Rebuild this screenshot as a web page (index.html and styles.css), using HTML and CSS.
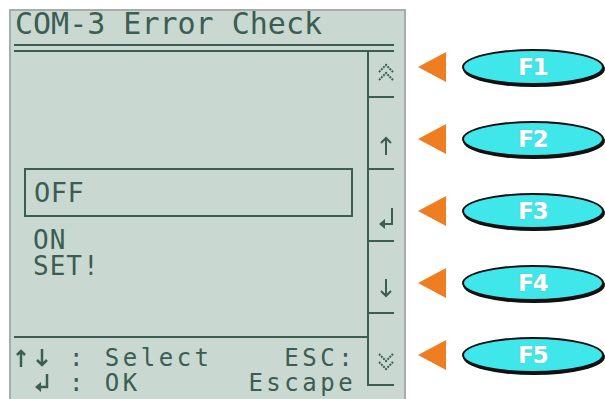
FILE: index.html
```html
<!DOCTYPE html>
<html lang="en">
<head>
  <meta charset="UTF-8">
  <title>COM-3 Error Check</title>
  <link rel="stylesheet" href="styles.css">
</head>
<body>

<div class="wrap">
  <div class="lcd">
    <div class="title">COM-3 Error Check</div>
    <div class="rule"></div>
    <div class="screen">
      <div class="main">
        <div class="list">
          <div class="option">OFF</div>
          <div class="options">
            <div>ON</div>
            <div>SET!</div>
          </div>
        </div>
        <div class="help">
          <div class="line"><svg class="arr" width="18" height="18" viewBox="0 0 18 18"><line x1="6" y1="2" x2="6" y2="18"/><polyline points="2,6 6,2 10,6"/></svg><svg class="arr" width="18" height="18" viewBox="0 0 18 18"><line x1="9" y1="0" x2="9" y2="16"/><polyline points="4,11 9,16 14,11"/></svg> : Select    ESC:</div>
          <div class="line"> <svg class="arr" width="18" height="18" viewBox="0 0 18 18"><polyline points="14,0 14,13 7,13"/><polygon class="fill" points="2,13 8,8 8,18"/></svg> : OK      Escape</div>
        </div>
      </div>
      <div class="side">
        <div class="cell first">
          <svg width="16" height="20" viewBox="0 0 16 20"><polyline class="dots" points="1,9 8,2 15,9"/><polyline class="dots" points="1,17 8,10 15,17"/></svg>
        </div>
        <div class="cell">
          <svg width="16" height="20" viewBox="0 0 16 20"><line x1="8" y1="3" x2="8" y2="20"/><polyline points="3,8 8,3 13,8"/></svg>
        </div>
        <div class="cell">
          <svg width="16" height="20" viewBox="0 0 16 20"><polyline points="14,1 14,17 6,17"/><polygon class="fill" points="1,17 7,12 7,22"/></svg>
        </div>
        <div class="cell">
          <svg width="16" height="20" viewBox="0 0 16 20"><line x1="8" y1="0" x2="8" y2="17"/><polyline points="3,12 8,17 13,12"/></svg>
        </div>
        <div class="cell">
          <svg width="16" height="20" viewBox="0 0 16 20"><polyline class="dots" points="1,3 8,10 15,3"/><polyline class="dots" points="1,11 8,18 15,11"/></svg>
        </div>
      </div>
    </div>
  </div>

  <div class="keys">
    <div class="key"><span class="pointer"></span><span class="fkey">F1</span></div>
    <div class="key"><span class="pointer"></span><span class="fkey">F2</span></div>
    <div class="key"><span class="pointer"></span><span class="fkey">F3</span></div>
    <div class="key"><span class="pointer"></span><span class="fkey">F4</span></div>
    <div class="key"><span class="pointer"></span><span class="fkey">F5</span></div>
  </div>
</div>

</body>
</html>
```

FILE: styles.css
```css
body {
  margin: 0;
  background: #fff;
}
.wrap {
  display: flex;
  padding: 9px 0 0 9px;
}
.lcd {
  width: 397px;
  height: 390px;
  box-sizing: border-box;
  border: 2px solid #a7adaa;
  border-bottom: none;
  background: #c9d9d1;
  color: #3d5c52;
  padding: 0 10px 0 3px;
  font-family: "DejaVu Sans Mono", "Liberation Mono", monospace;
}
.title {
  font-size: 30px;
  line-height: 24px;
  margin-top: 1px;
  padding-left: 1px;
  white-space: nowrap;
}
.rule {
  margin-top: 8px;
  height: 8px;
  box-sizing: border-box;
  border-top: 2px solid #3d5c52;
  border-bottom: 2px solid #3d5c52;
}
.screen {
  display: flex;
  align-items: flex-start;
}
.main {
  width: 353px;
}
.list {
  height: 286px;
  box-sizing: border-box;
  padding-top: 116px;
  border-bottom: 2px solid #3d5c52;
}
.option {
  margin-left: 10px;
  width: 329px;
  height: 49px;
  box-sizing: border-box;
  border: 2px solid #3d5c52;
  padding-left: 8px;
  font-size: 27px;
  line-height: 45px;
  letter-spacing: 0.5px;
}
.options {
  margin-top: 10px;
  padding-left: 19px;
  font-size: 26px;
  line-height: 26px;
  letter-spacing: 1px;
}
.help {
  padding: 8px 0 0 1px;
  font-size: 24px;
  line-height: 25px;
  letter-spacing: 3.5px;
}
.help .line {
  white-space: pre;
  height: 25px;
}
.help .arr {
  display: inline-block;
  vertical-align: -1px;
}
.help .arr line,
.help .arr polyline {
  fill: none;
  stroke: #3d5c52;
  stroke-width: 2.5;
}
.help .arr .fill {
  fill: #3d5c52;
}
.side {
  width: 25px;
  border-left: 2px solid #3d5c52;
}
.cell {
  height: 72px;
  box-sizing: border-box;
  border-bottom: 2px solid #3d5c52;
  display: flex;
  align-items: flex-end;
  justify-content: flex-end;
  padding-bottom: 13px;
}
.cell.first {
  height: 46px;
}
.cell svg {
  display: block;
  overflow: visible;
}
.cell svg line,
.cell svg polyline {
  fill: none;
  stroke: #3d5c52;
  stroke-width: 2;
}
.cell svg .dots {
  stroke-dasharray: 2 1;
}
.cell svg .fill {
  fill: #3d5c52;
}
.keys {
  padding-top: 22px;
  margin-left: 12px;
}
.key {
  height: 72px;
  display: flex;
  align-items: center;
}
.pointer {
  width: 0;
  height: 0;
  border-top: 15.5px solid transparent;
  border-bottom: 15.5px solid transparent;
  border-right: 28px solid #ef7d22;
}
.fkey {
  margin-left: 16px;
  width: 142px;
  height: 36px;
  box-sizing: border-box;
  border: 2px solid #111;
  border-radius: 50%;
  box-shadow: 1px 2px 0 #111;
  background: #3fe6ea;
  color: #fff;
  font-family: "DejaVu Sans", "Liberation Sans", sans-serif;
  font-weight: bold;
  font-size: 23px;
  letter-spacing: -1px;
  display: flex;
  align-items: center;
  justify-content: center;
  text-shadow: 0 0 1px #8aa;
}
```
